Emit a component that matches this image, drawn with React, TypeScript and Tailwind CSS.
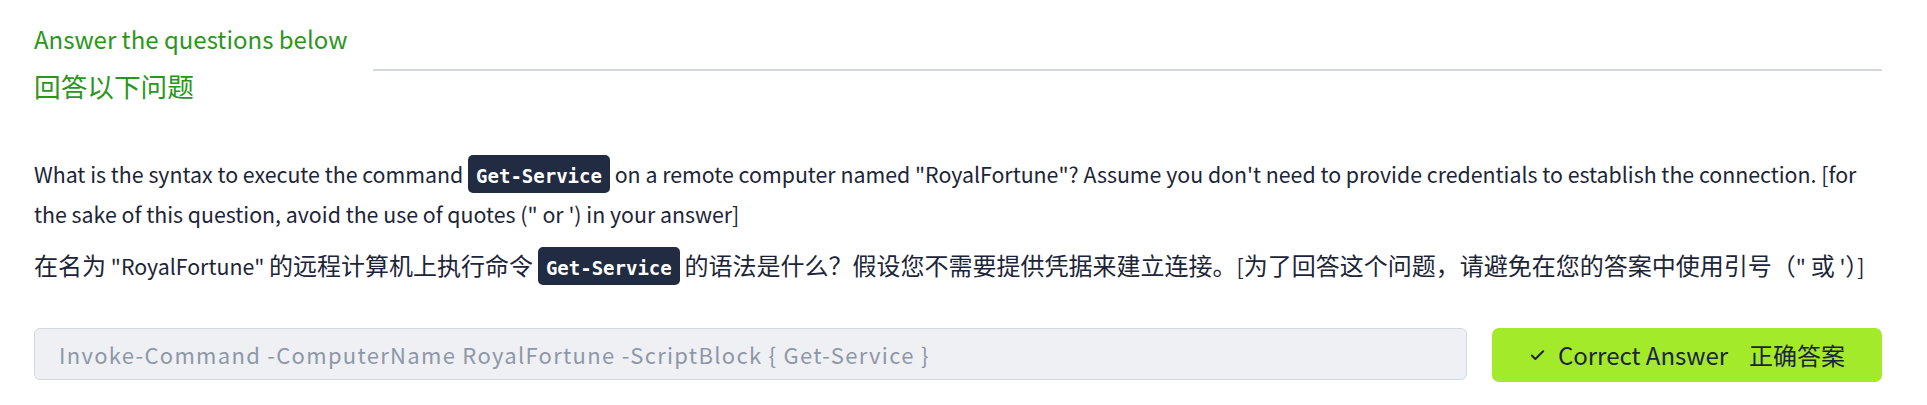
import React from "react";

const Code = ({ children }: { children: React.ReactNode }) => (
  <code className="inline-block rounded-[5px] bg-[#212c42] px-[8px] pt-[7px] pb-[3px] align-baseline font-['DejaVu_Sans_Mono',monospace] text-[19px] leading-[28px] font-bold text-white">
    {children}
  </code>
);

const Zh = ({ children }: { children: React.ReactNode }) => (
  <span className="text-[24px]">{children}</span>
);

export default function App() {
  return (
    <div className="min-h-[405px] w-full bg-white font-['Noto_Sans_CJK_SC','Noto_Sans',sans-serif]">
      <div className="ml-[34px] w-[1848px]">
        <div className="flex items-start gap-[26px] pt-[19px]">
          <div className="flex flex-col leading-[40px] text-[#2b961c]">
            <div className="text-[24px]">Answer the questions below</div>
            <div className="mt-[7px] text-[26.67px]">回答以下问题</div>
          </div>
          <div className="mt-[50px] h-[2px] flex-1 bg-[#d3d7dd]" />
        </div>

        <div className="mt-[48px] text-[21.33px] leading-[40px] text-[#1c2538]">
          <p>
            What is the syntax to execute the command <Code>Get-Service</Code> on a remote computer named
            "RoyalFortune"? Assume you don't need to provide credentials to establish the connection. [for
            the sake of this question, avoid the use of quotes (" or ') in your answer]
          </p>
          <p className="mt-[11px]">
            <Zh>在名为</Zh> "RoyalFortune" <Zh>的远程计算机上执行命令</Zh> <Code>Get-Service</Code>{" "}
            <Zh>的语法是什么？假设您不需要提供凭据来建立连接。</Zh>[<Zh>为了回答这个问题，请避免在您的答案中使用引号（</Zh>"{" "}
            <Zh>或</Zh> '<Zh>）</Zh>]
          </p>
        </div>

        <div className="mt-[42px] flex items-start gap-[25px]">
          <input
            readOnly
            placeholder="Invoke-Command -ComputerName RoyalFortune -ScriptBlock { Get-Service }"
            className="h-[52px] flex-1 rounded-[6px] border border-[#d3d8e0] bg-[#eef0f4] px-[24px] text-[22px] tracking-[1.3px] text-[#1c2538] outline-none placeholder:text-[#8e97a8]"
          />
          <button className="flex h-[54px] w-[390px] items-center justify-center rounded-[7px] bg-[#a3ea2a] text-[24px] text-[#1c2538]">
            <svg width="17" height="17" viewBox="0 0 24 24" fill="none" stroke="currentColor" strokeWidth="2.8" strokeLinecap="round" strokeLinejoin="round">
              <path d="M20 6 9 17l-5-5" />
            </svg>
            <span className="ml-[12px]">Correct Answer</span>
            <span className="ml-[21px]">正确答案</span>
          </button>
        </div>
      </div>
    </div>
  );
}
